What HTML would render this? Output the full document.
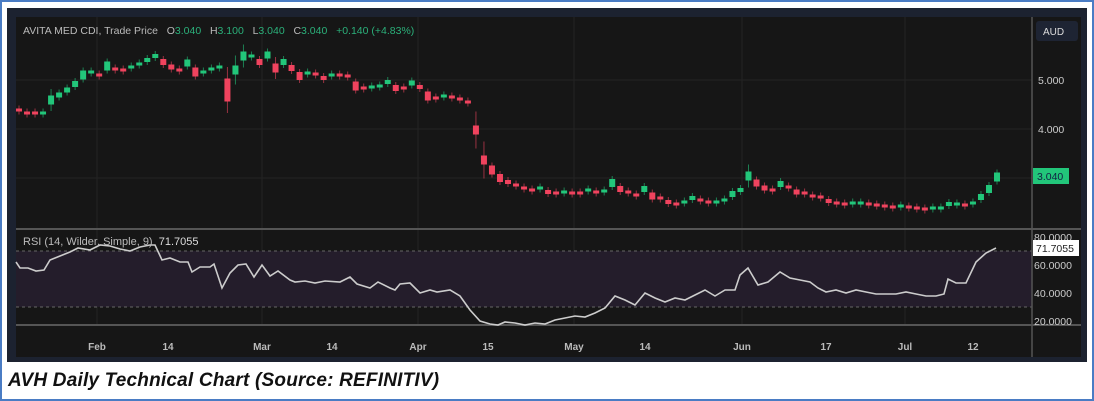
<!DOCTYPE html>
<html><head><meta charset="utf-8"><style>
html,body{margin:0;padding:0;}
body{width:1094px;height:401px;position:relative;background:#fff;overflow:hidden;font-family:"Liberation Sans",sans-serif;}
.bd{position:absolute;left:0;top:0;width:1090px;height:397px;border:2px solid #4a7cc4;}
.frame{position:absolute;left:7px;top:8px;width:1080px;height:354px;background:#1c2230;}
.cap{position:absolute;left:8px;top:370px;font-size:19px;font-weight:bold;font-style:italic;color:#111;letter-spacing:0.2px;}
svg{position:absolute;left:0;top:0;}
</style></head><body>
<div class="bd"></div>
<div class="frame"></div>
<svg width="1094" height="401" id="s" font-family="Liberation Sans, sans-serif">
<rect x="16" y="17" width="1065" height="340" fill="#161616"/>
<g stroke="#242424" stroke-width="1">
<line x1="16" x2="1032" y1="80" y2="80"/><line x1="16" x2="1032" y1="129" y2="129"/><line x1="16" x2="1032" y1="178" y2="178"/>
<line x1="97" x2="97" y1="17" y2="325"/><line x1="262" x2="262" y1="17" y2="325"/><line x1="418" x2="418" y1="17" y2="325"/><line x1="574" x2="574" y1="17" y2="325"/><line x1="742" x2="742" y1="17" y2="325"/><line x1="905" x2="905" y1="17" y2="325"/>
</g>
<rect x="16" y="251" width="1016" height="56" fill="#241d2b"/>
<line x1="16" x2="1032" y1="251" y2="251" stroke="#666" stroke-dasharray="3,3"/>
<line x1="16" x2="1032" y1="307" y2="307" stroke="#666" stroke-dasharray="3,3"/>
<line x1="16" x2="1081" y1="229" y2="229" stroke="#555" stroke-width="2"/>
<line x1="16" x2="1081" y1="325" y2="325" stroke="#555" stroke-width="2"/>
<line x1="1032" x2="1032" y1="17" y2="357" stroke="#555" stroke-width="1.5"/>
<g id="c"></g>
<polyline id="r" fill="none" stroke="#ccc" stroke-width="1.6"/>
<text x="23" y="34" font-size="10.5" fill="#bbb" xml:space="preserve">AVITA MED CDI, Trade Price   O<tspan fill="#2bb07a">3.040</tspan>   H<tspan fill="#2bb07a">3.100</tspan>   L<tspan fill="#2bb07a">3.040</tspan>   C<tspan fill="#2bb07a">3.040</tspan>   <tspan fill="#2bb07a">+0.140 (+4.83%)</tspan></text>
<text x="23" y="245" font-size="11" fill="#bbb" xml:space="preserve">RSI (14, Wilder, Simple, 9)  <tspan fill="#ddd">71.7055</tspan></text>
<rect x="1036" y="21" width="42" height="20" rx="3" fill="#1e2433"/>
<text x="1043" y="35" font-size="10" fill="#ddd">AUD</text>
<g font-size="10.5" fill="#ccc">
<text x="1038" y="84">5.000</text><text x="1038" y="133">4.000</text>
<text x="1034" y="241">80.0000</text><text x="1034" y="269">60.0000</text><text x="1034" y="297">40.0000</text><text x="1034" y="325">20.0000</text>
</g>
<rect x="1033" y="168" width="36" height="16" fill="#22c67a"/>
<text x="1037" y="180" font-size="10.5" fill="#124">3.040</text>
<rect x="1033" y="240" width="46" height="16" fill="#fff"/>
<text x="1036" y="252" font-size="10.5" fill="#222">71.7055</text>
<g font-size="10" fill="#bbb" font-weight="bold" text-anchor="middle">
<text x="97" y="350">Feb</text><text x="168" y="350">14</text><text x="262" y="350">Mar</text><text x="332" y="350">14</text><text x="418" y="350">Apr</text><text x="488" y="350">15</text><text x="574" y="350">May</text><text x="645" y="350">14</text><text x="742" y="350">Jun</text><text x="826" y="350">17</text><text x="905" y="350">Jul</text><text x="973" y="350">12</text>
</g>
</svg>
<div class="cap">AVH Daily Technical Chart (Source: REFINITIV)</div>
<script>
var ys=[110,113,113,113,100,95,90,84,75,72,75,66,69,70,67,64,60,56,62,67,70,63,72,72,69,67,90,70,56,56,62,55,68,62,68,76,73,74,78,75,75,76,86,88,87,86,82,88,88,83,87,96,98,96,97,99,102,130,160,170,178,182,185,188,190,188,192,193,192,193,193,190,192,191,183,189,192,195,189,196,198,202,204,202,198,200,202,202,200,194,190,176,183,188,190,184,187,192,193,196,197,201,203,204,203,203,204,205,206,207,206,207,208,209,208,208,204,204,205,203,197,189,177];
var n=ys.length,x0=19,x1=997,st=(x1-x0)/(n-1),h='';
for(var i=0;i<n;i++){var x=x0+i*st,c=ys[i],o=i?ys[i-1]:108;var up=c<o||(c==o&&i%2);var col=up?'#22c67a':'#f0435e';
var d=Math.abs(c-o),bh=Math.max(3,Math.min(d,i==26?26:9)),t=c-bh/2,b=c+bh/2;
var wk=d>12?Math.min(d/2,14):3;
h+='<line x1="'+x+'" x2="'+x+'" y1="'+(t-wk)+'" y2="'+(b+wk)+'" stroke="'+col+'" opacity="0.6"/>';
h+='<rect x="'+(x-3)+'" y="'+t+'" width="6" height="'+bh+'" fill="'+col+'"/>';}
document.getElementById('c').innerHTML=h;
var r=[16,262,20,268,28,268,36,271,44,270,50,260,60,256,70,252,78,248,90,250,100,245,110,246,120,249,130,251,140,247,150,245,155,245,162,260,170,258,180,262,188,262,192,272,200,267,210,267,214,264,222,288,230,273,238,265,246,264,254,277,262,265,270,276,278,271,290,280,295,282,305,281,315,283,325,281,340,282,350,277,357,284,370,288,378,282,390,288,395,290,400,284,410,283,420,293,430,290,437,292,450,290,460,296,470,310,480,321,490,324,498,325,505,322,515,323,525,325,535,323,545,324,555,320,565,318,575,316,585,317,595,313,605,308,615,296,625,300,635,305,645,293,655,298,665,302,675,298,685,300,695,295,705,290,715,296,725,290,735,290,740,275,748,268,758,285,768,282,780,272,790,278,800,280,810,282,818,288,826,292,836,290,846,293,856,290,866,292,876,294,886,294,896,294,906,292,916,294,926,296,936,296,944,294,948,279,956,283,966,283,976,262,986,253,996,248],p='';
for(var j=0;j<r.length;j+=2)p+=r[j]+','+r[j+1]+' ';
document.getElementById('r').setAttribute('points',p);
</script>
</body></html>
